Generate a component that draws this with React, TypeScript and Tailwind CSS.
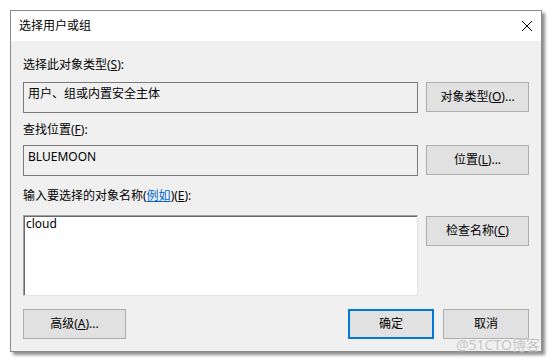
import React from "react";

const font = { fontFamily: '"Noto Sans", "Noto Sans CJK SC", sans-serif' };

function Btn({ children, primary }: { children: React.ReactNode; primary?: boolean }) {
  return (
    <div
      className={
        "flex h-[30px] shrink-0 items-center justify-center bg-[#e1e1e1] text-[12px] leading-[16px] text-black " +
        (primary ? "border-2 border-[#0078d7]" : "border border-[#adadad]")
      }
    >
      {children}
    </div>
  );
}

export default function App() {
  return (
    <div className="relative h-[363px] w-[553px] bg-white pl-[10px] pt-[10px]" style={font}>
      <div className="flex h-[342px] w-[532px] flex-col border border-[#8a8a8a] bg-[#f0f0f0] shadow-[3px_3px_3px_rgba(0,0,0,0.45)]">
        <div className="flex h-[30px] shrink-0 items-center justify-between bg-white pl-[8px] pr-[8px]">
          <span className="text-[12px] leading-[16px] text-black">选择用户或组</span>
          <svg width="12" height="12" viewBox="0 0 12 12">
            <path d="M1 1 L11 11 M11 1 L1 11" stroke="#000" strokeWidth="1" fill="none" />
          </svg>
        </div>
        <div className="flex flex-col px-[12px] pt-[16px] text-[12px] leading-[16px] text-black">
          <div className="h-[16px]">
            选择此对象类型(<u>S</u>):
          </div>
          <div className="mt-[9px] flex items-start gap-[8px]">
            <div className="h-[31px] flex-1 border border-[#7a7a7a] bg-[#f0f0f0] pl-[4px] pt-[3px]">
              用户、组或内置安全主体
            </div>
            <div className="w-[103px]">
              <Btn>
                对象类型(<u>O</u>)...
              </Btn>
            </div>
          </div>
          <div className="mt-[9px] h-[16px]">
            查找位置(<u>F</u>):
          </div>
          <div className="mt-[7px] flex items-start gap-[8px]">
            <div className="h-[31px] flex-1 border border-[#7a7a7a] bg-[#f0f0f0] pl-[4px] pt-[3px]">
              BLUEMOON
            </div>
            <div className="w-[103px]">
              <Btn>
                位置(<u>L</u>)...
              </Btn>
            </div>
          </div>
          <div className="mt-[12px] h-[16px]">
            输入要选择的对象名称(<span className="text-[#0066cc] underline">例如</span>)(<u>E</u>):
          </div>
          <div className="mt-[11px] flex items-start gap-[8px]">
            <div className="h-[81px] flex-1 border border-b-[#e3e3e3] border-l-[#a0a0a0] border-r-[#e3e3e3] border-t-[#a0a0a0] bg-white pl-[2px] shadow-[inset_1px_1px_0_#696969]">
              cloud
            </div>
            <div className="mt-[1px] w-[103px]">
              <Btn>
                检查名称(<u>C</u>)
              </Btn>
            </div>
          </div>
          <div className="mt-[13px] flex items-center">
            <div className="w-[103px]">
              <Btn>
                高级(<u>A</u>)...
              </Btn>
            </div>
            <div className="flex-1" />
            <div className="w-[86px]">
              <Btn primary>确定</Btn>
            </div>
            <div className="ml-[9px] w-[86px]">
              <Btn>取消</Btn>
            </div>
          </div>
        </div>
      </div>
      <div
        className="absolute left-[456px] top-[336px] text-[14px] leading-[18px] text-[#c4c4c4]"
        style={{ textShadow: "0 0 2px #fff" }}
      >
        @51CTO博客
      </div>
    </div>
  );
}
